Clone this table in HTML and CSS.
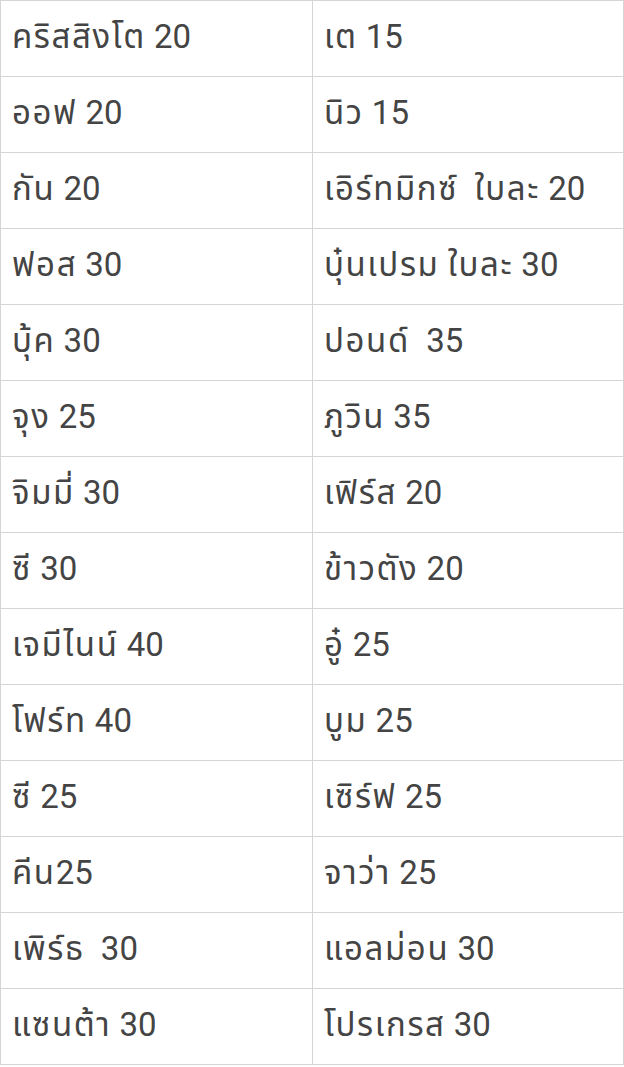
FILE: index.html
```html
<!DOCTYPE html>
<html lang="th">
<head>
<meta charset="utf-8">
<link rel="stylesheet" href="styles.css">
</head>
<body>
<table class="list">
<tr><td><span class="name">คริสสิงโต</span> 20</td><td><span class="name">เต</span> 15</td></tr>
<tr><td><span class="name">ออฟ</span> 20</td><td><span class="name">นิว</span> 15</td></tr>
<tr><td><span class="name">กัน</span> 20</td><td><span class="name">เอิร์ทมิกซ์</span>&nbsp; <span class="name">ใบละ</span> 20</td></tr>
<tr><td><span class="name">ฟอส</span> 30</td><td><span class="name">บุ๋นเปรม</span> <span class="name">ใบละ</span> 30</td></tr>
<tr><td><span class="name">บุ้ค</span> 30</td><td><span class="name">ปอนด์</span>&nbsp; 35</td></tr>
<tr><td><span class="name">จุง</span> 25</td><td><span class="name">ภูวิน</span> 35</td></tr>
<tr><td><span class="name">จิมมี่</span> 30</td><td><span class="name">เฟิร์ส</span> 20</td></tr>
<tr><td><span class="name">ซี</span> 30</td><td><span class="name">ข้าวตัง</span> 20</td></tr>
<tr><td><span class="name">เจมีไนน์</span> 40</td><td><span class="name">อู๋</span> 25</td></tr>
<tr><td><span class="name">โฟร์ท</span> 40</td><td><span class="name">บูม</span> 25</td></tr>
<tr><td><span class="name">ซี</span> 25</td><td><span class="name">เซิร์ฟ</span> 25</td></tr>
<tr><td><span class="name">คีน</span>25</td><td><span class="name">จาว่า</span> 25</td></tr>
<tr><td><span class="name">เพิร์ธ</span>&nbsp; 30</td><td><span class="name">แอลม่อน</span> 30</td></tr>
<tr><td><span class="name">แซนต้า</span> 30</td><td><span class="name">โปรเกรส</span> 30</td></tr>
</table>
</body>
</html>
```
FILE: styles.css
```css
html, body {
  margin: 0;
  padding: 0;
  background: #ffffff;
}
.list {
  border-collapse: collapse;
  width: 624px;
  table-layout: fixed;
  font-family: Roboto, "Noto Sans Thai", "Noto Sans", sans-serif;
  font-size: 33px;
  color: #444444;
}
.list td {
  box-sizing: border-box;
  border: 1px solid #d4d4d4;
  height: 76px;
  padding: 0 0 4px 11px;
  vertical-align: middle;
  white-space: nowrap;
  line-height: 1;
}
.list td:first-child {
  width: 312px;
}
.name {
  letter-spacing: 1.6px;
}
```
